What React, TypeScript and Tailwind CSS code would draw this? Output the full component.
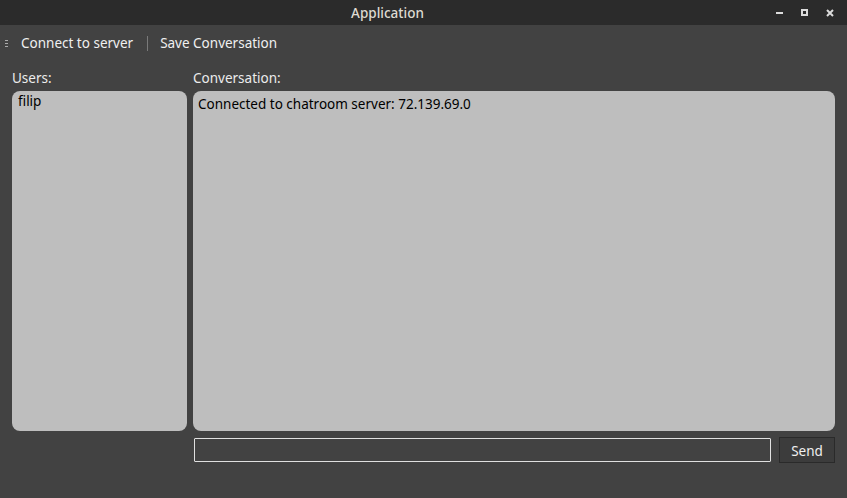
import React from "react";

export default function App() {
  return (
    <div
      className="w-[847px] h-[498px] flex flex-col bg-[#424242] overflow-hidden"
      style={{ fontFamily: '"Noto Sans", "DejaVu Sans", sans-serif' }}
    >
      {/* Title bar */}
      <div className="h-[25px] bg-[#2b2b2b] flex items-center shrink-0">
        <div className="flex-1 text-center text-[13.5px] font-medium text-[#dfdbd2] leading-none pl-[8px] pt-[2px]">Application</div>
        <div className="h-[25px] flex items-center mr-[5px]">
          <div className="w-[25px] flex justify-center">
            <div className="w-[7px] h-[2px] bg-[#dcdcdc]" />
          </div>
          <div className="w-[25px] flex justify-center">
            <div className="w-[7px] h-[7px] border-2 border-[#dcdcdc]" />
          </div>
          <div className="w-[25px] flex justify-center">
            <svg width="8" height="8" viewBox="0 0 8 8">
              <path d="M1 1 L7 7 M7 1 L1 7" stroke="#dcdcdc" strokeWidth="2" />
            </svg>
          </div>
        </div>
      </div>

      {/* Menu bar */}
      <div className="h-[35px] flex items-center shrink-0 text-[13.5px] text-[#f0f0f0] pt-[2px]">
        <div className="w-[21px] pl-[5px] flex flex-col gap-[2px]">
          <div className="w-[3px] h-px bg-[#aaaaaa]" />
          <div className="w-[3px] h-px bg-[#aaaaaa]" />
          <div className="w-[3px] h-px bg-[#aaaaaa]" />
        </div>
        <span className="leading-none">Connect to server</span>
        <div className="w-px h-[15px] bg-[#7a7a7a] ml-[14px] mr-[12px]" />
        <span className="leading-none">Save Conversation</span>
      </div>

      {/* Content */}
      <div className="flex-1 flex px-[12px] gap-[6px] text-[13.5px]">
        <div className="w-[175px] flex flex-col">
          <div className="h-[31px] flex items-center text-[#ececec] pt-[5px]">Users:</div>
          <div className="h-[340px] bg-[#bebebe] rounded-[8px] px-[6px] pt-[1px] text-black leading-[19px]">filip</div>
        </div>
        <div className="flex-1 flex flex-col">
          <div className="h-[31px] flex items-center text-[#ececec] pt-[5px]">Conversation:</div>
          <div className="h-[340px] bg-[#bebebe] rounded-[8px] px-[5px] pt-[3px] text-black">
            Connected to chatroom server: 72.139.69.0
          </div>
          <div className="flex items-center mt-[6px] gap-[8px]">
            <div className="ml-[1px] flex-1 h-[24px] border border-[#e0e0e0] rounded-[1px]" />
            <button className="w-[56px] h-[26px] bg-[#3c3c3c] border border-[#2a2a2a] text-[#f0f0f0] text-[13.5px] leading-none pt-[3px]">
              Send
            </button>
          </div>
        </div>
      </div>
    </div>
  );
}
